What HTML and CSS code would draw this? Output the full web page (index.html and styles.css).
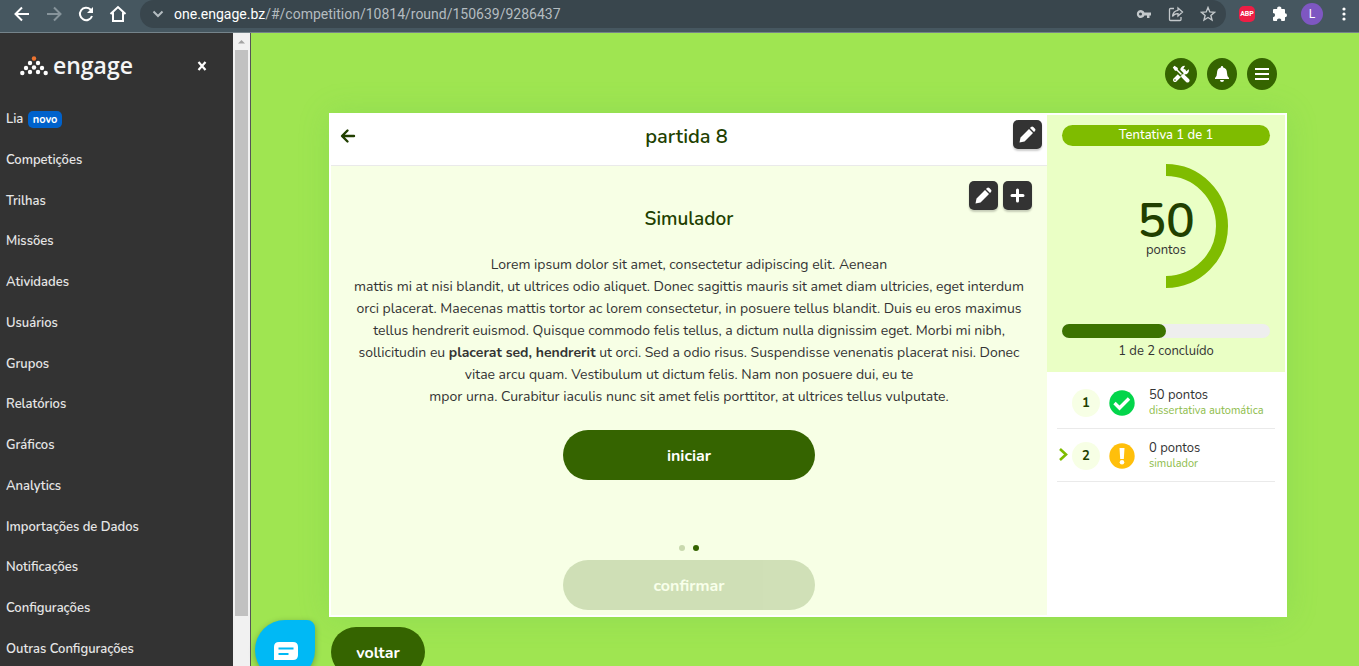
FILE: index.html
```html
<!DOCTYPE html>
<html lang="pt-BR">
<head>
    <meta charset="UTF-8">
    <meta name="viewport" content="width=device-width, initial-scale=1">
    <title>engage</title>
    <link rel="stylesheet" href="styles.css">
</head>
<body>

<header class="browser">
    <button class="nav-btn" aria-label="Voltar página">
        <svg width="20" height="20" viewBox="0 0 20 20"><path d="M17 10H4M10 3.500L3.500 10l6.500 6.500" fill="none" stroke="#fff" stroke-width="2"/></svg>
    </button>
    <button class="nav-btn" aria-label="Avançar página">
        <svg width="20" height="20" viewBox="0 0 20 20"><path d="M3 10h13M10 3.500l6.500 6.500-6.500 6.500" fill="none" stroke="#87949b" stroke-width="2"/></svg>
    </button>
    <button class="nav-btn" aria-label="Recarregar">
        <svg width="20" height="20" viewBox="0 0 20 20"><path d="M16 12a6.200 6.200 0 1 1-1.500-6.500L16 7" fill="none" stroke="#fff" stroke-width="2"/><path d="M17 3v6h-6z" fill="#fff"/></svg>
    </button>
    <button class="nav-btn" aria-label="Início">
        <svg width="20" height="20" viewBox="0 0 20 20"><path d="M2.500 10L10 3l7.500 7M5 8.500V17h10V8.500" fill="none" stroke="#fff" stroke-width="2"/></svg>
    </button>
    <div class="address">
        <svg width="12" height="12" viewBox="0 0 12 12"><path d="M1.500 3.500L6 8l4.500-4.500" fill="none" stroke="#b4bcc0" stroke-width="2"/></svg>
        <p class="url"><span class="host">one.engage.bz</span>/#/competition/10814/round/150639/9286437</p>
        <button class="addr-btn" aria-label="Senhas">
            <svg width="16" height="16" viewBox="0 0 16 16"><path d="M8.500 6.500H15v3h-1.500V12H11V9.500H8.500A4 4 0 1 1 8.500 6.500zM4.500 6.500a1.500 1.500 0 1 0 0 3 1.500 1.500 0 0 0 0-3z" fill="#c3c8cb" fill-rule="evenodd"/></svg>
        </button>
        <button class="addr-btn" aria-label="Compartilhar">
            <svg width="16" height="16" viewBox="0 0 16 16" fill="none" stroke="#c3c8cb" stroke-width="1.300"><path d="M6 2.500H2.500Q1.500 2.500 1.500 3.500v10q0 1 1 1h9.500q1 0 1-1V11"/><path d="M10 2l4.500 4-4.500 4V7.700Q6.500 7.500 4.500 10.500 5 5 10 4.300z"/></svg>
        </button>
        <button class="addr-btn" aria-label="Favoritos">
            <svg width="16" height="16" viewBox="0 0 16 16"><path d="M8 1.500l1.800 4.400 4.700.4-3.600 3.100 1.100 4.600L8 11.500 4 14l1.100-4.600L1.500 6.300l4.700-.4z" fill="none" stroke="#c3c8cb" stroke-width="1.400"/></svg>
        </button>
    </div>
    <div class="extensions">
        <span class="abp">ABP</span>
        <svg class="puzzle" width="16" height="16" viewBox="0 0 16 16"><path d="M1 4q0-1 1-1h3.200a2.100 2.100 0 1 1 4.100 0H12q1 0 1 1v3.200a2 2 0 1 1 0 4V14q0 1-1 1H9.200a2.100 2.100 0 1 0-4.100 0H2q-1 0-1-1v-2.800a2.100 2.100 0 1 0 0-4.200z" fill="#fff"/></svg>
        <span class="avatar">L</span>
        <svg class="kebab" width="4" height="16" viewBox="0 0 4 16" fill="#fff"><circle cx="2" cy="3" r="1.600"/><circle cx="2" cy="8" r="1.600"/><circle cx="2" cy="13" r="1.600"/></svg>
    </div>
</header>

<div class="app">
    <aside class="sidebar">
        <div class="brand">
            <svg width="28" height="20" viewBox="0 0 28 20" fill="#fff">
                <circle cx="14" cy="2.500" r="2.200" fill="#ee7430"/>
                <circle cx="10" cy="7" r="2.200"/><circle cx="18" cy="7" r="2.200"/>
                <circle cx="6" cy="12" r="2.200"/><circle cx="14" cy="11.500" r="2.200"/><circle cx="22" cy="12" r="2.200"/>
                <circle cx="2.300" cy="17" r="2.200"/><circle cx="10" cy="16" r="2.200"/><circle cx="18" cy="16" r="2.200"/><circle cx="25.700" cy="17" r="2.200"/>
            </svg>
            <span class="brand-name">engage</span>
            <button class="close" aria-label="Fechar menu">
                <svg width="10" height="10" viewBox="0 0 10 10"><path d="M1.500 1l7 8M8.500 1l-7 8" stroke="#fff" stroke-width="2.200"/></svg>
            </button>
        </div>
        <nav class="menu">
            <a href="#">Lia <span class="tag">novo</span></a>
            <a href="#">Competições</a>
            <a href="#">Trilhas</a>
            <a href="#">Missões</a>
            <a href="#">Atividades</a>
            <a href="#">Usuários</a>
            <a href="#">Grupos</a>
            <a href="#">Relatórios</a>
            <a href="#">Gráficos</a>
            <a href="#">Analytics</a>
            <a href="#">Importações de Dados</a>
            <a href="#">Notificações</a>
            <a href="#">Configurações</a>
            <a href="#">Outras Configurações</a>
        </nav>
    </aside>
    <div class="scrollbar">
        <svg width="17" height="17" viewBox="0 0 17 17"><path d="M5 10.500h7L8.500 7z" fill="#a3a3a3"/></svg>
        <div class="thumb"></div>
    </div>

    <main class="page">
        <div class="top-actions">
            <button class="round-btn wide" aria-label="Ferramentas">
                <svg width="18" height="18" viewBox="0 0 18 18">
                    <path d="M3 15L12 6" stroke="#fff" stroke-width="4" stroke-linecap="round"/>
                    <path d="M16.800 4.200A4.400 4.400 0 1 1 13 .9L11.500 3.500l.6 2.200 2.200.6z" fill="#fff"/>
                    <path d="M2 2l8 8" stroke="#356400" stroke-width="5"/>
                    <path d="M.8 2.500L2.500.8 5.800 3v1.700L10 9 9 10 4.700 5.800H3z" fill="#fff"/>
                    <path d="M11.300 11.300l4.200 4.200" stroke="#356400" stroke-width="6"/>
                    <path d="M11.300 11.300l4.200 4.200" stroke="#fff" stroke-width="4" stroke-linecap="round"/>
                    <circle cx="3" cy="15" r=".8" fill="#356400"/>
                </svg>
            </button>
            <button class="round-btn" aria-label="Notificações">
                <svg width="16" height="18" viewBox="0 0 16 18"><path d="M8 1q1.200 0 1.200 1.400Q13 3.300 13 8q0 3.500 2 5v1H1v-1q2-1.500 2-5 0-4.700 3.800-5.600Q6.800 1 8 1zM6 15h4a2 2 0 0 1-4 0z" fill="#fff"/></svg>
            </button>
            <button class="round-btn" aria-label="Menu">
                <svg width="14" height="14" viewBox="0 0 14 14"><path d="M0 2h14M0 7h14M0 12h14" stroke="#fff" stroke-width="2"/></svg>
            </button>
        </div>

        <div class="card">
            <section class="quiz">
                <header class="quiz-header">
                    <button class="back" aria-label="Retornar">
                        <svg width="16" height="16" viewBox="0 0 16 16"><path d="M14 8H2.500M7.500 2.500L2 8l5.500 5.500" fill="none" stroke="#213f00" stroke-width="2.400" stroke-linecap="round" stroke-linejoin="round"/></svg>
                    </button>
                    <h1>partida 8</h1>
                    <button class="tool-btn" aria-label="Editar partida">
                        <svg width="17" height="17" viewBox="0 0 17 17" fill="#fff"><path d="M.5 16.500l1-5L10 3l4 4-8.500 8.500zM11 2l1-1q1.200-1 2.300 0l1.700 1.700q1 1.100 0 2.300l-1 1z"/></svg>
                    </button>
                </header>
                <div class="quiz-body">
                    <div class="quiz-tools">
                        <button class="tool-btn" aria-label="Editar simulador">
                            <svg width="17" height="17" viewBox="0 0 17 17" fill="#fff"><path d="M.5 16.500l1-5L10 3l4 4-8.500 8.500zM11 2l1-1q1.200-1 2.300 0l1.700 1.700q1 1.100 0 2.300l-1 1z"/></svg>
                        </button>
                        <button class="tool-btn" aria-label="Adicionar">
                            <svg width="15" height="15" viewBox="0 0 15 15"><path d="M7.500 2v11M2 7.500h11" stroke="#fff" stroke-width="3" stroke-linecap="round"/></svg>
                        </button>
                    </div>
                    <h2>Simulador</h2>
                    <p class="text">
                        Lorem ipsum dolor sit amet, consectetur adipiscing elit. Aenean<br>
                        mattis mi at nisi blandit, ut ultrices odio aliquet. Donec sagittis mauris sit amet diam ultricies, eget interdum<br>
                        orci placerat. Maecenas mattis tortor ac lorem consectetur, in posuere tellus blandit. Duis eu eros maximus<br>
                        tellus hendrerit euismod. Quisque commodo felis tellus, a dictum nulla dignissim eget. Morbi mi nibh,<br>
                        sollicitudin eu <b>placerat sed, hendrerit</b> ut orci. Sed a odio risus. Suspendisse venenatis placerat nisi. Donec<br>
                        vitae arcu quam. Vestibulum ut dictum felis. Nam non posuere dui, eu te<br>
                        mpor urna. Curabitur iaculis nunc sit amet felis porttitor, at ultrices tellus vulputate.
                    </p>
                    <button class="pill">iniciar</button>
                    <div class="dots"><span class="dot"></span><span class="dot active"></span></div>
                    <button class="pill" disabled>confirmar</button>
                </div>
            </section>

            <aside class="status">
                <div class="score">
                    <p class="attempt">Tentativa 1 de 1</p>
                    <div class="ring">
                        <svg width="124" height="124" viewBox="0 0 124 124"><path d="M62 6a56 56 0 0 1 0 112" fill="none" stroke="#7fbc00" stroke-width="12"/></svg>
                        <div class="ring-label">
                            <strong>50</strong>
                            <span>pontos</span>
                        </div>
                    </div>
                    <div class="progress"><div class="bar" style="width: 50%"></div></div>
                    <p class="done">1 de 2 concluído</p>
                </div>
                <ul class="steps">
                    <li>
                        <span class="marker"></span>
                        <span class="number">1</span>
                        <svg width="26" height="26" viewBox="0 0 26 26"><circle cx="13" cy="13" r="12.700" fill="#03d54b"/><path d="M5.500 13l5 5 9.500-9.500" fill="none" stroke="#fff" stroke-width="3.400"/></svg>
                        <div class="step-text">
                            <p>50 pontos</p>
                            <small>dissertativa automática</small>
                        </div>
                    </li>
                    <li>
                        <span class="marker">
                            <svg width="12" height="16" viewBox="0 0 12 16"><path d="M3 1l6 5.500L3 12" fill="none" stroke="#7fbc00" stroke-width="2.600"/></svg>
                        </span>
                        <span class="number">2</span>
                        <svg width="26" height="26" viewBox="0 0 26 26"><circle cx="13" cy="13" r="12.700" fill="#ffbf0b"/><path d="M10.500 5h5l-.7 11h-3.600z" fill="#fff"/><circle cx="13" cy="19.300" r="2.300" fill="#fff"/></svg>
                        <div class="step-text">
                            <p>0 pontos</p>
                            <small>simulador</small>
                        </div>
                    </li>
                </ul>
            </aside>
        </div>

        <button class="pill return">voltar</button>
        <button class="chat" aria-label="Chat">
            <svg width="24" height="18" viewBox="0 0 24 18"><path d="M5 0h14q5 0 5 5v8q0 5-5 5H0V5q0-5 5-5z" fill="#fff"/><path d="M4.500 6.500h15M4.500 12h10" stroke="#00b9f5" stroke-width="2"/></svg>
        </button>
    </main>
</div>

</body>
</html>
```
FILE: styles.css
```css
* {
    box-sizing: border-box;
}
body {
    margin: 0;
    height: 100vh;
    display: flex;
    flex-direction: column;
    overflow: hidden;
    font-family: Nunito, Lato, sans-serif;
    font-size: 14px;
    color: #333;
}
h1, h2, p, ul {
    margin: 0;
    padding: 0;
}
button {
    display: flex;
    align-items: center;
    justify-content: center;
    padding: 0;
    border: none;
    background: none;
    font-family: inherit;
    cursor: pointer;
}
svg {
    display: block;
    flex: none;
}

/* browser bar */
.browser {
    flex: none;
    display: flex;
    align-items: center;
    height: 33px;
    padding: 0 13px 4px 12px;
    background-color: #465760;
    border-bottom: 1px solid #75838a;
}
.nav-btn {
    width: 20px;
    margin-right: 12px;
}
.address {
    flex: 1;
    display: flex;
    align-items: center;
    height: 28px;
    padding: 0 10px 0 12px;
    border-radius: 14px;
    background-color: #39464d;
}
.url {
    flex: 1;
    margin-left: 10px;
    font-family: Roboto, sans-serif;
    font-size: 14px;
    line-height: 20px;
    color: #b4bcc0;
}
.host {
    color: #fff;
}
.addr-btn {
    margin-left: 16px;
}
.extensions {
    display: flex;
    align-items: center;
    gap: 13px;
    margin-left: 13px;
}
.abp {
    width: 16px;
    border-radius: 5px;
    background-color: #ed1e45;
    font-family: Roboto, sans-serif;
    font-size: 7px;
    font-weight: bold;
    line-height: 16px;
    text-align: center;
    color: #fff;
}
.puzzle {
    margin-left: 4px;
}
.avatar {
    width: 22px;
    border-radius: 50%;
    background-color: #7e57c2;
    font-family: Roboto, sans-serif;
    font-size: 12px;
    line-height: 22px;
    text-align: center;
    color: #fff;
}
.kebab {
    margin-left: 6px;
}

/* side menu */
.app {
    flex: 1;
    min-height: 0;
    display: flex;
}
.sidebar {
    flex: none;
    width: 233px;
    display: flex;
    flex-direction: column;
    background-color: #333;
}
.brand {
    flex: none;
    display: flex;
    align-items: center;
    height: 66px;
    padding: 0 26px 0 20px;
}
.brand-name {
    margin-left: 5px;
    padding-bottom: 2px;
    font-family: "Open Sans", sans-serif;
    font-size: 23px;
    font-weight: 600;
    line-height: 30px;
    color: #f5f5f5;
}
.close {
    margin-left: auto;
}
.menu {
    flex: 1;
    display: flex;
    flex-direction: column;
    justify-content: space-between;
    padding: 10px 6px 7px 6px;
}
.menu a {
    font-size: 13px;
    font-weight: 600;
    line-height: 20px;
    color: #e6e6e6;
    text-decoration: none;
}
.tag {
    display: inline-block;
    margin-left: 1px;
    padding: 0 5px;
    border-radius: 5px;
    background-color: #0062cc;
    font-size: 11px;
    font-weight: bold;
    line-height: 17px;
    color: #fff;
}
.scrollbar {
    flex: none;
    width: 18px;
    display: flex;
    flex-direction: column;
    padding-bottom: 50px;
    background-color: #f1f1f1;
    border-right: 1px solid #555;
}
.thumb {
    flex: 1;
    margin: 0 2px;
    background-color: #c1c1c1;
}

/* page */
.page {
    flex: 1;
    position: relative;
    padding: 25px 72px 0 78px;
    background-color: #9fe551;
}
.top-actions {
    display: flex;
    justify-content: flex-end;
    gap: 10px;
    margin: 0 10px 23px 0;
}
.round-btn {
    width: 30px;
    height: 32px;
    border-radius: 50%;
    background-color: #356400;
}
.round-btn.wide {
    width: 32px;
}
.card {
    display: flex;
    border: 2px solid #fff;
    background-color: #fff;
    box-shadow: 0 0 30px rgba(80, 190, 90, 0.2);
}
.quiz {
    flex: 1;
}
.quiz-header {
    display: flex;
    align-items: center;
    height: 51px;
    padding: 0 5px 12px 9px;
    border-bottom: 1px solid #eaeaea;
}
.back {
    width: 20px;
    padding-top: 3px;
    justify-content: flex-start;
}
.quiz-header h1 {
    flex: 1;
    padding-top: 6px;
    font-size: 20px;
    font-weight: 600;
    line-height: 28px;
    text-align: center;
    color: #213f00;
}
.tool-btn {
    width: 29px;
    height: 29px;
    border-radius: 5px;
    background-color: #333;
    box-shadow: 0 2px 2px rgba(0, 0, 0, 0.2);
}
.quiz-body {
    display: flex;
    flex-direction: column;
    align-items: center;
    padding: 15px 15px 5px 15px;
    background-color: #f7ffe5;
}
.quiz-tools {
    align-self: flex-end;
    display: flex;
    gap: 5px;
}
.quiz-body h2 {
    font-size: 19px;
    font-weight: 600;
    line-height: 18px;
    color: #213f00;
}
.text {
    margin: 26px 0 22px 0;
    line-height: 22px;
    text-align: center;
}
.pill {
    width: 252px;
    height: 50px;
    padding-top: 2px;
    border-radius: 25px;
    background-color: #356400;
    font-size: 16px;
    font-weight: bold;
    color: #fff;
}
.pill:disabled {
    opacity: 0.2;
}
.dots {
    display: flex;
    gap: 8px;
    margin: 65px 0 9px 0;
}
.dot {
    width: 6px;
    height: 6px;
    border-radius: 50%;
    background-color: #c9d9ae;
}
.dot.active {
    background-color: #356400;
}
.pill.return {
    width: 94px;
    margin: 10px 0 0 2px;
}
.chat {
    position: absolute;
    left: 4px;
    bottom: -14px;
    width: 60px;
    height: 60px;
    padding: 2px 0 0 2px;
    border-radius: 30px 8px 30px 30px;
    background-color: #00b9f5;
    box-shadow: 0 2px 6px rgba(0, 0, 0, 0.3);
}

/* score panel */
.status {
    flex: none;
    width: 238px;
}
.score {
    padding: 10px 15px 11px 15px;
    background-color: #eaffc5;
    text-align: center;
}
.attempt {
    border-radius: 11px;
    background-color: #7fbc00;
    font-size: 13px;
    font-weight: 500;
    line-height: 21px;
    color: #fff;
}
.ring {
    display: grid;
    justify-items: center;
    align-items: center;
    margin: 18px 0 36px 0;
}
.ring > * {
    grid-area: 1 / 1;
}
.ring-label {
    display: flex;
    flex-direction: column;
    padding-top: 10px;
}
.ring-label strong {
    font-size: 48px;
    font-weight: 600;
    line-height: 38px;
    color: #213f00;
}
.ring-label span {
    font-size: 13px;
    line-height: 20px;
}
.progress {
    border-radius: 7px;
    background-color: #eee;
}
.bar {
    height: 14px;
    border-radius: 7px;
    background-color: #3c7300;
}
.done {
    margin-top: 3px;
    font-size: 13px;
    line-height: 20px;
}
.steps {
    padding: 4px 10px;
    list-style: none;
}
.steps li {
    display: flex;
    align-items: center;
    height: 53px;
    padding-top: 1px;
    border-bottom: 1px solid #eaeaea;
}
.marker {
    width: 15px;
}
.number {
    width: 28px;
    margin-right: 9px;
    border-radius: 50%;
    background-color: #f7ffe5;
    font-size: 13px;
    font-weight: bold;
    line-height: 28px;
    text-align: center;
    color: #213f00;
}
.step-text {
    margin-left: 14px;
    font-size: 13px;
    line-height: 16px;
}
.step-text small {
    display: block;
    font-size: 11px;
    color: #8dbc4a;
}
```
